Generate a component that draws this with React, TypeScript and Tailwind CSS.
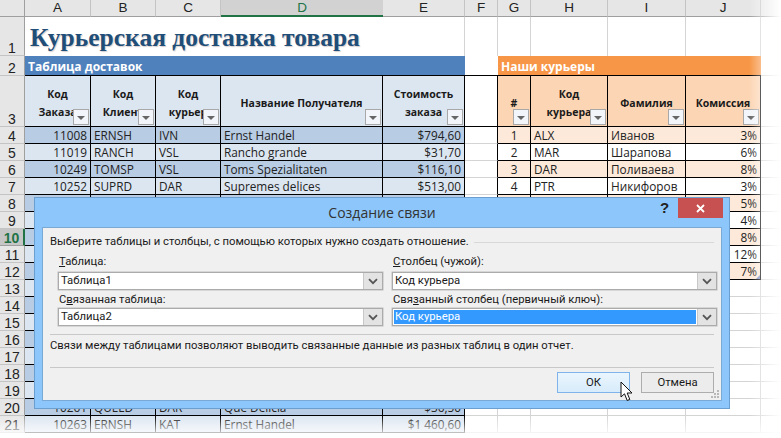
import React from "react";

const COLUMNS = ["A", "B", "C", "D", "E", "F", "G", "H", "I", "J", ""];

const deliveries: Record<number, string[]> = {
  4: ["11008", "ERNSH", "IVN", "Ernst Handel", "$794,60"],
  5: ["11019", "RANCH", "VSL", "Rancho grande", "$31,70"],
  6: ["10249", "TOMSP", "VSL", "Toms Spezialitaten", "$116,10"],
  7: ["10252", "SUPRD", "DAR", "Supremes delices", "$513,00"],
  20: ["10261", "QUELD", "DAR", "Que Delicia", "$36,50"],
  21: ["10263", "ERNSH", "KAT", "Ernst Handel", "$1 460,60"],
};

const couriers: Record<number, string[]> = {
  4: ["1", "ALX", "Иванов", "3%"],
  5: ["2", "MAR", "Шарапова", "6%"],
  6: ["3", "DAR", "Поливаева", "8%"],
  7: ["4", "PTR", "Никифоров", "3%"],
  8: ["", "", "", "5%"],
  9: ["", "", "", "4%"],
  10: ["", "", "", "8%"],
  11: ["", "", "", "12%"],
  12: ["", "", "", "7%"],
};

const ROW_NUMBERS = Array.from({ length: 18 }, (_, i) => i + 4);

function RowHeader({ n, selected }: { n: number; selected?: boolean }) {
  return (
    <div
      className={
        selected
          ? "flex items-end justify-center bg-[#c6c6c6] border-r-2 border-r-[#217346] border-b border-b-[#9f9f9f] font-['Liberation_Sans',sans-serif] font-bold text-[14px] leading-[14px] text-[#217346]"
          : "flex items-end justify-center bg-[#e6e6e6] border-r border-r-[#9f9f9f] border-b border-b-[#c4c4c4] font-['Liberation_Sans',sans-serif] text-[14px] leading-[14px] text-[#222]"
      }
    >
      {n}
    </div>
  );
}

function FilterButton() {
  return (
    <div className="absolute right-[1px] bottom-[1px] w-[16px] h-[16px] flex items-center justify-center bg-[#f2f5f9] border border-[#a8a8a8]">
      <div className="mt-[2px] w-0 h-0 border-l-[4px] border-r-[4px] border-t-[4px] border-l-transparent border-r-transparent border-t-[#666]" />
    </div>
  );
}

function HeadCell({ lines, bg }: { lines: string[]; bg: string }) {
  return (
    <div className={`relative flex flex-col items-center justify-center pt-[3px] border-r border-b border-black text-[10.5px] font-bold leading-[18px] text-[#1a1a1a] overflow-hidden ${bg}`}>
      {lines.map((line) => (
        <span key={line} className="whitespace-nowrap">
          {line}
        </span>
      ))}
      <FilterButton />
    </div>
  );
}

function BodyCell({ text, className }: { text: string; className: string }) {
  return (
    <div className={`flex items-center px-[3px] pt-[2px] border-r border-b border-black text-[11.8px] leading-none text-[#222] whitespace-nowrap overflow-hidden ${className}`}>
      {text}
    </div>
  );
}

function Sheet() {
  return (
    <div className="grid grid-cols-[25px_66px_65px_65px_162px_82px_33px_33px_77px_78px_75px_20px] grid-rows-[17px_39px_20px_51px_repeat(18,17px)]">
      {/* Column letters */}
      <div className="bg-[#e6e6e6] border-r border-b border-[#9f9f9f]" />
      {COLUMNS.map((c, i) => (
        <div
          key={i}
          className={
            c === "D"
              ? "flex items-center justify-center pt-px bg-[#d2d2d2] border-b-2 border-b-[#217346] text-[#217346] font-['Liberation_Sans',sans-serif] text-[13.5px]"
              : "flex items-center justify-center pt-px bg-[#e6e6e6] border-r border-r-[#c4c4c4] border-b border-b-[#9f9f9f] text-[#222] font-['Liberation_Sans',sans-serif] text-[13.5px]"
          }
        >
          {c}
        </div>
      ))}

      {/* Row 1 */}
      <RowHeader n={1} />
      <div className="col-span-5 flex items-center pl-[5px] pt-[3px] border-r border-r-[#d4d4d4] font-['Liberation_Serif',serif] font-bold text-[25.5px] leading-none text-[#1f4e79] [text-shadow:1px_1px_1px_rgba(90,60,60,0.25)]">
        Курьерская доставка товара
      </div>
      <div className="border-r border-r-[#d4d4d4]" />
      <div className="border-r border-r-[#d4d4d4]" />
      <div className="border-r border-r-[#d4d4d4]" />
      <div className="border-r border-r-[#d4d4d4]" />
      <div className="border-r border-r-[#d4d4d4]" />
      <div />

      {/* Row 2 */}
      <RowHeader n={2} />
      <div className="col-span-5 flex items-center pl-[3px] pt-[3px] bg-[#4f81bd] border-b border-black text-white text-[12px] leading-none font-bold">
        Таблица доставок
      </div>
      <div className="border-b border-black" />
      <div className="col-span-4 flex items-center pl-[3px] pt-[3px] bg-[#f79646] border-b border-black text-white text-[12px] leading-none font-bold">
        Наши курьеры
      </div>
      <div className="border-b border-b-[#d4d4d4]" />

      {/* Row 3 */}
      <RowHeader n={3} />
      <HeadCell lines={["Код", "Заказа"]} bg="bg-[#dce6f1]" />
      <HeadCell lines={["Код", "Клиент"]} bg="bg-[#dce6f1]" />
      <HeadCell lines={["Код", "курьер"]} bg="bg-[#dce6f1]" />
      <HeadCell lines={["Название Получателя"]} bg="bg-[#dce6f1]" />
      <HeadCell lines={["Стоимость", "заказа"]} bg="bg-[#dce6f1]" />
      <div className="border-r border-b border-black" />
      <HeadCell lines={["#"]} bg="bg-[#fcd5b4]" />
      <HeadCell lines={["Код", "курьера"]} bg="bg-[#fcd5b4]" />
      <HeadCell lines={["Фамилия"]} bg="bg-[#fcd5b4]" />
      <HeadCell lines={["Комиссия"]} bg="bg-[#fcd5b4]" />
      <div className="border-b border-b-[#d4d4d4]" />

      {/* Data rows */}
      {ROW_NUMBERS.map((n) => {
        const d = deliveries[n] ?? ["", "", "", "", ""];
        const c = couriers[n];
        const blue = n % 2 === 0 ? "bg-[#b8cce4]" : "bg-[#dce6f1]";
        const peach = n % 2 === 0 ? "bg-[#fde9d9]" : "bg-white";
        return (
          <React.Fragment key={n}>
            <RowHeader n={n} selected={n === 10} />
            <BodyCell text={d[0]} className={`justify-end ${blue}`} />
            <BodyCell text={d[1]} className={blue} />
            <BodyCell text={d[2]} className={blue} />
            <BodyCell text={d[3]} className={blue} />
            <BodyCell text={d[4]} className={`justify-end ${blue}`} />
            {c ? (
              <>
                <div className="border-r border-r-black border-b border-b-[#d4d4d4]" />
                <BodyCell text={c[0]} className={`justify-center ${peach}`} />
                <BodyCell text={c[1]} className={peach} />
                <BodyCell text={c[2]} className={peach} />
                <BodyCell text={c[3]} className={`justify-end ${peach}`} />
                <div className="border-b border-b-[#d4d4d4]" />
              </>
            ) : (
              <>
                <div className="border-r border-b border-[#d4d4d4]" />
                <div className="border-r border-b border-[#d4d4d4]" />
                <div className="border-r border-b border-[#d4d4d4]" />
                <div className="border-r border-b border-[#d4d4d4]" />
                <div className="border-r border-b border-[#d4d4d4]" />
                <div className="border-b border-[#d4d4d4]" />
              </>
            )}
          </React.Fragment>
        );
      })}
    </div>
  );
}

function Chevron() {
  return (
    <svg width="10" height="7" viewBox="0 0 10 7" fill="none">
      <path d="M1 1.2 L5 5.2 L9 1.2" stroke="#555" strokeWidth="1.8" />
    </svg>
  );
}

function SelectBox({ value, selected }: { value: string; selected?: boolean }) {
  return (
    <div className="flex h-[18px] bg-white border border-[#ababab] shadow-[0_0_0_0.5px_#bdbdbd]">
      <div className="flex-1 flex items-stretch p-[1px]">
        <div className={selected ? "flex-1 flex items-center pl-[1px] bg-[#3399ff] text-white" : "flex-1 flex items-center pl-[1px] text-[#1a1a1a]"}>
          {value}
        </div>
      </div>
      <div className="w-[19px] flex items-center justify-center bg-[#e3e3e3] border-l border-[#c8c8c8]">
        <Chevron />
      </div>
    </div>
  );
}

function Dialog() {
  return (
    <div className="absolute left-[34px] top-[197px] w-[696px] h-[212px] flex flex-col bg-[#8cc6fa] border border-[#6b9fcf] font-['Roboto',sans-serif] text-[11.3px] leading-[16px] text-[#1a1a1a]">
      {/* Title bar */}
      <div className="relative h-[29px] shrink-0 flex items-center justify-center font-['Open_Sans',sans-serif] text-[14px] text-[#333]">
        Создание связи
        <span className="absolute left-[625px] top-[0px] font-['Liberation_Sans',sans-serif] font-bold text-[15px] leading-[20px] text-[#222]">?</span>
        <div className="absolute right-[6px] top-0 w-[45px] h-[20px] flex items-center justify-center bg-[#c75050]">
          <svg width="9" height="9" viewBox="0 0 9 9">
            <path d="M1 1 L8 8 M8 1 L1 8" stroke="white" strokeWidth="1.8" />
          </svg>
        </div>
      </div>

      {/* Content panel */}
      <div className="flex-1 mx-[7px] mb-[7px] flex flex-col relative px-[7px] bg-[#f0f0f0] border border-[#79a9d4]">
        <div className="flex items-center gap-[5px] mt-[6px] h-[16px]">
          <span className="whitespace-nowrap">Выберите таблицы и столбцы, с помощью которых нужно создать отношение.</span>
          <div className="flex-1 h-px bg-[#d8d8d8]" />
        </div>

        <div className="grid grid-cols-[325px_325px] gap-x-[9px] ml-[8px]">
          <div>
            <div className="h-[22px] pt-[4px] pl-[1px]"><u>Т</u>аблица:</div>
            <SelectBox value="Таблица1" />
          </div>
          <div>
            <div className="h-[22px] pt-[4px] pl-[1px]"><u>С</u>толбец (чужой):</div>
            <SelectBox value="Код курьера" />
          </div>
          <div>
            <div className="h-[18px] pt-[2px] pl-[1px]">С<u>в</u>язанная таблица:</div>
            <SelectBox value="Таблица2" />
          </div>
          <div>
            <div className="h-[18px] pt-[2px] pl-[1px]">Свя<u>з</u>анный столбец (первичный ключ):</div>
            <SelectBox value="Код курьера" selected />
          </div>
        </div>

        <div className="h-px bg-[#c8c8c8] mt-[8px]" />
        <div className="mt-[3px] h-[16px] whitespace-nowrap">Связи между таблицами позволяют выводить связанные данные из разных таблиц в один отчет.</div>
        <div className="h-px bg-[#c8c8c8] mt-[13px]" />

        <div className="flex justify-end gap-[11px] mt-[4px]">
          <div className="w-[73px] h-[21px] flex items-center justify-center bg-gradient-to-b from-[#eaf5fd] to-[#d8ecfb] border border-[#7eb4ea]">ОК</div>
          <div className="w-[73px] h-[21px] flex items-center justify-center bg-[#ececec] border border-[#adadad]">Отмена</div>
        </div>

        {/* Resize grip */}
        <svg className="absolute right-[1px] bottom-[1px]" width="9" height="9" viewBox="0 0 9 9" fill="#b8b8b8">
          <rect x="6" y="0" width="2" height="2" />
          <rect x="3" y="3" width="2" height="2" />
          <rect x="6" y="3" width="2" height="2" />
          <rect x="0" y="6" width="2" height="2" />
          <rect x="3" y="6" width="2" height="2" />
          <rect x="6" y="6" width="2" height="2" />
        </svg>
      </div>
    </div>
  );
}

function Cursor() {
  return (
    <svg className="absolute left-[620px] top-[381px]" width="14" height="22" viewBox="0 0 14 22">
      <path d="M1 1 L1 16 L4.5 12.8 L7.2 19.5 L9.8 18.4 L7.2 12 L12 12 Z" fill="white" stroke="#111" strokeWidth="1" strokeLinejoin="round" />
    </svg>
  );
}

export default function App() {
  return (
    <div className="relative w-[781px] h-[438px] overflow-hidden bg-white font-['Open_Sans',sans-serif]">
      <Sheet />
      {/* Table resize handle */}
      <div className="absolute left-[756px] top-[275px] w-0 h-0 border-b-[4px] border-l-[4px] border-l-transparent border-b-[#7a8fc0]" />
      <Dialog />
      <Cursor />
      {/* Screenshot fade on right and bottom edges */}
      <div className="absolute right-0 top-0 bottom-0 w-[32px] bg-gradient-to-r from-transparent to-white" />
      <div className="absolute left-0 right-0 bottom-0 h-[22px] bg-gradient-to-b from-transparent to-white" />
    </div>
  );
}
